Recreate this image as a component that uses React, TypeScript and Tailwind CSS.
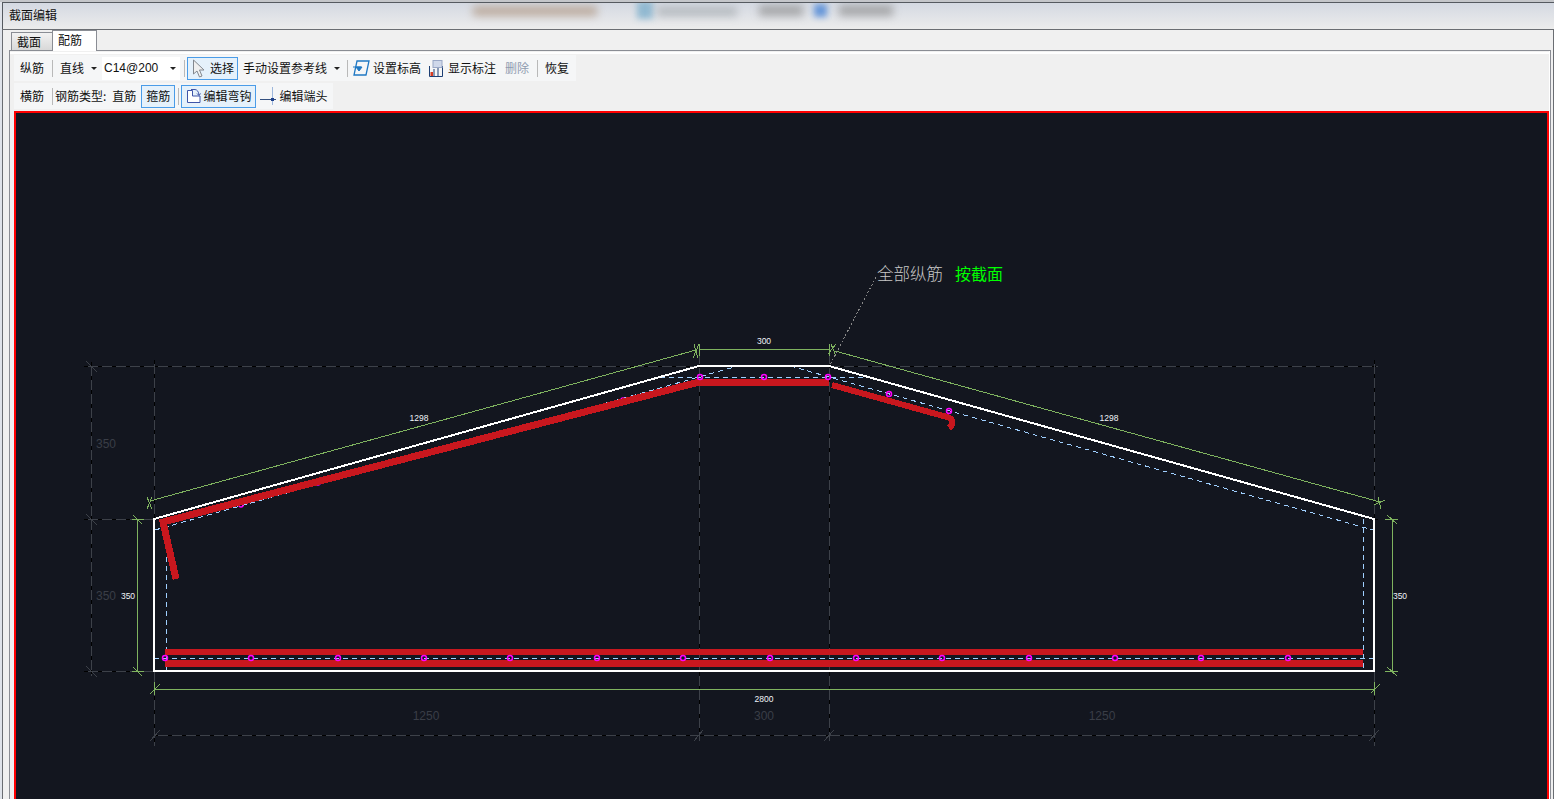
const uiFont = { fontFamily: '"Noto Sans CJK SC", "Liberation Sans", sans-serif' }

const bottomDots = [165, 251, 338, 424, 510, 597, 683, 770, 856, 942, 1029, 1115, 1201, 1288]
const slopeDots = [
  [241, 505],
  [318, 483],
  [394, 462],
  [470, 442],
  [547, 422],
  [623, 400],
]
const topDots = [
  [700, 377],
  [764, 377],
  [828, 377],
  [889, 394],
  [949, 411],
]

const gridLines = [
  "M84 366.5H1378",
  "M84 519.5H154",
  "M1374 519.5H1378",
  "M84 671.5H154",
  "M154 735.5H1374",
  "M91.5 362V676",
  "M154.5 360V746",
  "M699.5 350V741",
  "M829.5 350V741",
  "M1374.5 360V746",
]

const greenLines = [
  "M150 501L696 350",
  "M699 349.5H829",
  "M835 351L1380 502",
  "M137.5 519V671",
  "M1392.5 519V671",
  "M154 689.5H1374",
  // ticks
  "M133 515L142 524M132 519.5H144",
  "M133 667L142 676M132 671.5H144",
  "M1387 515L1397 524M1385 519.5H1398",
  "M1387 667L1397 676M1385 671.5H1398",
  "M154.5 682V695M150 694L160 684",
  "M1374.5 682V695M1371 693L1380 684",
  "M147 497L152 509M152 497L147 509",
  "M694 344L698 358M699 344L693 358M699.5 344V356",
  "M829 344V356M828 354L836 344M831 344L836 356",
  "M1378 497L1381 509M1374 505L1385 500",
]

function Dim({ x, y, children, faint }: { x: number; y: number; children: string; faint?: boolean }) {
  return (
    <text
      x={x}
      y={y}
      textAnchor="middle"
      fontFamily='"Liberation Sans", sans-serif'
      fontSize={faint ? 12 : 8.5}
      fill={faint ? "#3a3e47" : "#f0f4f8"}
    >
      {children}
    </text>
  )
}

function Drawing() {
  return (
    <svg className="block" width="1530" height="690" viewBox="16 113 1530 690">
      <g shapeRendering="crispEdges" fill="none">
        {gridLines.map((d) => (
          <g key={d}>
            <path d={d} stroke="#3d4149" />
            <path d={d} stroke="#000000" strokeDasharray="4 10" />
          </g>
        ))}
        <path d="M86 361L97 372M86 514L97 525M86 666L97 677M150 741L160 730M1369 741L1379 730M694 741L703 730M824 741L834 730" stroke="#3d4149" />
        {greenLines.map((d) => (
          <path key={d} d={d} stroke="#7fb35f" />
        ))}
        <path d="M876 277L830 365" stroke="#8a8a8a" strokeDasharray="2 2" />
        <path
          d="M155 530L738 366M790 366L1373 530M166 530V671M1363 519V671M154 658.5H1374M660 377.5H867"
          stroke="#a0d0ff"
          strokeDasharray="5 4"
        />
      </g>
      {slopeDots.map(([x, y]) => (
        <circle key={x} cx={x} cy={y} r="2" fill="none" stroke="#ff00ff" strokeWidth="1.5" />
      ))}
      <g fill="none" stroke="#c8171e" shapeRendering="crispEdges">
        <path d="M165 652H1363" strokeWidth="6" />
        <path d="M165 663.5H1363" strokeWidth="7" />
        <path d="M176 579L163 522L699 382H829" strokeWidth="7" />
        <path d="M832 385L947 417C954 419 954 424 949 428" strokeWidth="6" />
      </g>
      <path d="M154 671V519L699 366H829L1374 519V671Z" fill="none" stroke="#ffffff" strokeWidth="2" shapeRendering="crispEdges" />
      <g fill="none" stroke="#ff00ff" strokeWidth="1.5">
        {bottomDots.map((x) => (
          <circle key={x} cx={x} cy="658" r="2.5" />
        ))}
        {topDots.map(([x, y]) => (
          <circle key={x} cx={x} cy={y} r="2.5" />
        ))}
      </g>
      <Dim x={764} y={344}>300</Dim>
      <Dim x={419} y={421}>1298</Dim>
      <Dim x={1109} y={421}>1298</Dim>
      <Dim x={128} y={599}>350</Dim>
      <Dim x={1400} y={599}>350</Dim>
      <Dim x={764} y={702}>2800</Dim>
      <Dim x={106} y={448} faint>350</Dim>
      <Dim x={106} y={600} faint>350</Dim>
      <Dim x={426} y={720} faint>1250</Dim>
      <Dim x={764} y={720} faint>300</Dim>
      <Dim x={1102} y={720} faint>1250</Dim>
      <text x={877} y={280} fontSize="16.5" fill="#c8c8c8" fontFamily='"Noto Sans CJK SC", sans-serif' fontWeight="300">
        全部纵筋
      </text>
      <text x={955} y={280} fontSize="16" fill="#00ff00" fontFamily='"Noto Sans CJK SC", sans-serif'>
        按截面
      </text>
    </svg>
  )
}

function Sep({ className }: { className: string }) {
  return <span className={`h-[17px] w-px bg-[#b9b9b9] ${className}`} />
}

function Caret({ className }: { className: string }) {
  return <span className={`h-0 w-0 border-x-[3px] border-t-[3px] border-x-transparent border-t-[#222222] ${className}`} />
}

function PointerIcon() {
  return (
    <svg width="13" height="19" viewBox="0 0 13 19" className="ml-[4px] shrink-0">
      <path d="M1.5 1V15L5 12L7.5 18L10 17L7.5 11H12Z" fill="#f0f0f0" stroke="#83888f" />
    </svg>
  )
}

function LevelIcon() {
  return (
    <svg width="17" height="16" viewBox="0 0 17 16" className="shrink-0">
      <path d="M4 1H16L13 15H1Z" fill="none" stroke="#1f78c4" strokeWidth="1.3" />
      <path d="M0 7H8M3 7L6 11L9 7Z" fill="#1f78c4" stroke="#1f78c4" />
    </svg>
  )
}

function LabelIcon() {
  return (
    <svg width="14" height="17" viewBox="0 0 14 17" className="shrink-0">
      <path d="M0.5 6V16.5H13.5V6M5 16V9M9 16V6" fill="none" stroke="#1d3f74" />
      <rect x="4" y="0.5" width="9" height="7" fill="#cfd8ea" stroke="#9aa8c6" />
      <rect x="1.5" y="12" width="2.5" height="4" fill="#d83a20" />
    </svg>
  )
}

function HookIcon() {
  return (
    <svg width="15" height="16" viewBox="0 0 15 16" className="ml-[4px] shrink-0">
      <path d="M1.5 2.5H6.5V8H14V14.5H1.5Z" fill="#ffffff" stroke="#3f55a8" />
      <path d="M5 1.5H9Q12.5 2 13 7M11 5.5L13 7.5L14.5 5.5" fill="none" stroke="#3f55a8" />
    </svg>
  )
}

function EndIcon() {
  return (
    <svg width="16" height="18" viewBox="0 0 16 18" className="ml-1 shrink-0">
      <path d="M12.5 0V18" stroke="#9db7dc" />
      <path d="M0 12.5H16" stroke="#33507f" />
      <rect x="11" y="11" width="3" height="3" fill="#1c3f8a" />
    </svg>
  )
}

export default function App() {
  return (
    <div className="relative h-[799px] w-[1554px] overflow-hidden bg-[#dfe3ea] text-[12px] leading-none text-[#111111]" style={uiFont}>
      <div className="h-[2px] bg-[#c4c6ca]" />
      <div className="relative ml-[2px] h-[27px] overflow-hidden border-t border-l border-[#555a60] bg-gradient-to-b from-[#d4d9e2] to-[#ececec] pl-[6px] pt-[6px]">
        <span className="relative z-10 text-[#111111]">截面编辑</span>
        <div className="absolute left-[470px] top-[3px] h-[10px] w-[124px] bg-[#a88a70] opacity-60 blur-[4px]" />
        <div className="absolute left-[634px] top-[-2px] h-[18px] w-[16px] bg-[#7fb0cc] opacity-80 blur-[3px]" />
        <div className="absolute left-[654px] top-[4px] h-[9px] w-[80px] bg-[#a3a9ad] opacity-70 blur-[4px]" />
        <div className="absolute left-[756px] top-[2px] h-[11px] w-[44px] bg-[#8f8f8f] opacity-70 blur-[4px]" />
        <div className="absolute left-[811px] top-[1px] h-[13px] w-[13px] bg-[#5a8fd8] opacity-90 blur-[3px]" />
        <div className="absolute left-[836px] top-[2px] h-[11px] w-[54px] bg-[#8f8f8f] opacity-70 blur-[4px]" />
      </div>

      <div className="ml-[2px] flex h-[770px] flex-col border-x border-t border-[#6a6d72] bg-[#f0f0f0]">
        <div className="relative z-10 mb-[-1px] ml-[8px] flex h-[21px] items-end">
          <div className="flex h-[19px] w-[42px] items-center border border-[#8a8d94] bg-gradient-to-b from-[#f2f2f2] to-[#d8d8d8] pl-[5px] pt-[1px]">
            截面
          </div>
          <div className="ml-[-1px] flex h-[21px] w-[45px] items-center border border-b-0 border-[#8a8d94] bg-[#ffffff] pb-[3px] pl-[5px]">
            配筋
          </div>
        </div>
        <div className="mb-[-4px] ml-[6px] mr-[2px] flex min-h-0 flex-1 flex-col border border-[#8a8d94] pl-[4px] pr-[1px] pt-[1px] shadow-[inset_-1px_0_0_#ffffff]">
          <div className="h-[2px] -ml-[4px] -mr-[1px] bg-[#ffffff]" />
          <div className="mt-[1px] flex h-[26px] w-[562px] items-center bg-[#f5f6f7]">
            <span className="ml-[6px]">纵筋</span>
            <Sep className="ml-[8px]" />
            <span className="ml-[7px]">直线</span>
            <Caret className="ml-[7px]" />
            <div className="ml-[5px] flex h-[23px] w-[78px] items-center bg-[#ffffff] pl-[2px]" style={{ fontFamily: '"Liberation Sans", sans-serif' }}>
              C14@200
              <Caret className="ml-[12px]" />
            </div>
            <Sep className="ml-[4px]" />
            <div className="ml-[2px] flex h-[23px] w-[51px] items-center border border-[#4a9ce8] bg-[#e5f1fb]">
              <PointerIcon />
              <span className="ml-[5px]">选择</span>
            </div>
            <span className="ml-[5px]">手动设置参考线</span>
            <Caret className="ml-[7px]" />
            <Sep className="ml-[7px]" />
            <span className="ml-[5px]"><LevelIcon /></span>
            <span className="ml-[3px]">设置标高</span>
            <span className="ml-[8px]"><LabelIcon /></span>
            <span className="ml-[5px]">显示标注</span>
            <span className="ml-[9px] text-[#8f9bb0]">删除</span>
            <Sep className="ml-[8px]" />
            <span className="ml-[7px]">恢复</span>
          </div>
          <div className="mt-[2px] flex h-[26px] w-[319px] items-center bg-[#f5f6f7]">
            <span className="ml-[6px]">横筋</span>
            <Sep className="ml-[8px]" />
            <span className="ml-[2px]">钢筋类型:</span>
            <span className="ml-[6px]">直筋</span>
            <div className="ml-[5px] flex h-[23px] w-[34px] items-center justify-center border border-[#4a9ce8] bg-[#e5f1fb]">箍筋</div>
            <Sep className="ml-[3px]" />
            <div className="ml-[2px] flex h-[23px] w-[75px] items-center border border-[#4a9ce8] bg-[#e5f1fb]">
              <HookIcon />
              <span className="ml-[2px]">编辑弯钩</span>
            </div>
            <EndIcon />
            <span className="ml-[3px]">编辑端头</span>
          </div>
          <div className="mt-[2px] flex-1 overflow-hidden border-2 border-b-0 border-[#ff0000] bg-[#13161f]">
            <Drawing />
          </div>
        </div>
      </div>
    </div>
  )
}
